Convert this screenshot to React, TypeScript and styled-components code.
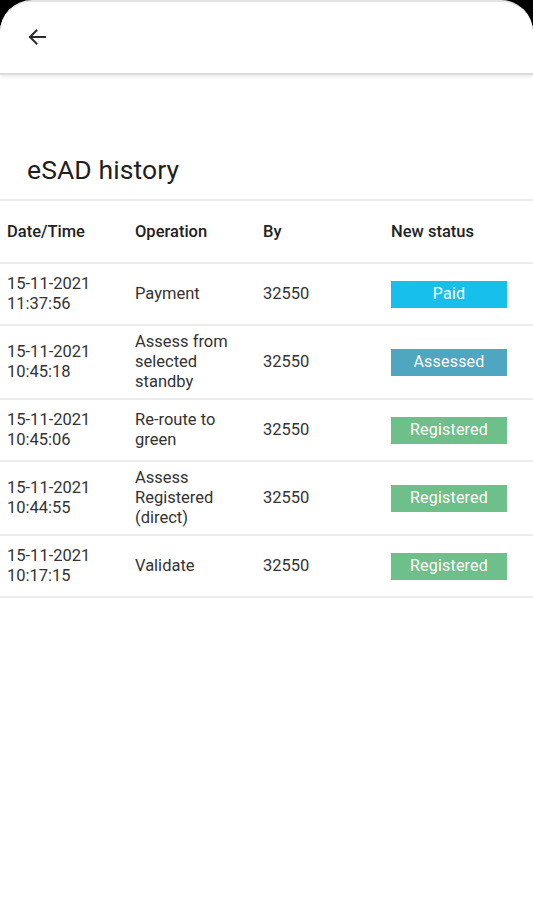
import React from "react";
import styled, { createGlobalStyle } from "styled-components";

const GlobalStyle = createGlobalStyle`
  html, body {
    margin: 0;
    padding: 0;
    background: #000;
  }
  body {
    font-family: Roboto, "Liberation Sans", Arial, sans-serif;
    -webkit-font-smoothing: antialiased;
  }
`;

const Screen = styled.div`
  position: relative;
  width: 533px;
  height: 900px;
  box-sizing: border-box;
  background: #fff;
  border-radius: 32px 32px 0 0;
  border-top: 2px solid #e3e3e3;
  overflow: hidden;
`;

const Notch = styled.div`
  position: absolute;
  top: -2px;
  left: 268px;
  width: 46px;
  height: 3px;
  background: #fff;
`;

const Header = styled.header`
  height: 71px;
  display: flex;
  align-items: center;
  padding-left: 25px;
  background: #fff;
  border-bottom: 2px solid #dcdcdc;
  box-shadow: 0 2px 3px rgba(0, 0, 0, 0.08);
`;

const BackButton = styled.button`
  width: 24px;
  height: 24px;
  margin-top: -2px;
  padding: 0;
  border: 0;
  background: none;
  display: flex;
  align-items: center;
  justify-content: center;
  color: #2b2b2b;
`;

const Title = styled.h1`
  margin: 0;
  padding: 79px 0 0 27px;
  height: 45px;
  font-size: 26.5px;
  font-weight: 400;
  line-height: 32px;
  color: #1e1e1e;
  letter-spacing: 0.1px;
`;

const Table = styled.table`
  width: 533px;
  border-collapse: collapse;
  table-layout: fixed;
  border-top: 2px solid #ececec;
`;

const HeadCell = styled.th`
  height: 61px;
  padding: 0 0 0 7px;
  text-align: left;
  font-size: 16.5px;
  font-weight: 500;
  color: #222;
  border-bottom: 2px solid #ececec;
`;

const Row = styled.tr`
  height: 62px;
  border-bottom: 2px solid #ececec;
`;

const Cell = styled.td`
  padding: 6px 0 6px 7px;
  vertical-align: middle;
  font-size: 16.5px;
  line-height: 20px;
  color: #333;
`;

const Badge = styled.div<{ $bg: string }>`
  width: 116px;
  height: 27px;
  display: flex;
  align-items: center;
  justify-content: center;
  background: ${(p) => p.$bg};
  color: #fff;
  font-size: 16px;
  letter-spacing: 0.2px;
`;

const STATUS_COLORS: Record<string, string> = {
  Paid: "#17bfeb",
  Assessed: "#4ea6c1",
  Registered: "#6dc089",
};

type Entry = { date: string; time: string; op: string[]; by: string; status: string };

const rows: Entry[] = [
  { date: "15-11-2021", time: "11:37:56", op: ["Payment"], by: "32550", status: "Paid" },
  {
    date: "15-11-2021",
    time: "10:45:18",
    op: ["Assess from", "selected", "standby"],
    by: "32550",
    status: "Assessed",
  },
  { date: "15-11-2021", time: "10:45:06", op: ["Re-route to", "green"], by: "32550", status: "Registered" },
  {
    date: "15-11-2021",
    time: "10:44:55",
    op: ["Assess", "Registered", "(direct)"],
    by: "32550",
    status: "Registered",
  },
  { date: "15-11-2021", time: "10:17:15", op: ["Validate"], by: "32550", status: "Registered" },
];

export default function App() {
  return (
    <>
      <GlobalStyle />
      <Screen>
        <Notch />
        <Header>
          <BackButton aria-label="Back">
            <svg width="24" height="24" viewBox="0 0 24 24" fill="none" stroke="currentColor" strokeWidth="2" strokeLinecap="square">
              <path d="M20 12H5" />
              <path d="M11.5 5.5L5 12l6.5 6.5" />
            </svg>
          </BackButton>
        </Header>
        <Title>eSAD history</Title>
        <Table>
          <colgroup>
            <col style={{ width: 128 }} />
            <col style={{ width: 128 }} />
            <col style={{ width: 128 }} />
            <col style={{ width: 149 }} />
          </colgroup>
          <thead>
            <tr>
              <HeadCell>Date/Time</HeadCell>
              <HeadCell>Operation</HeadCell>
              <HeadCell>By</HeadCell>
              <HeadCell>New status</HeadCell>
            </tr>
          </thead>
          <tbody>
            {rows.map((r, i) => (
              <Row key={i}>
                <Cell>
                  {r.date}
                  <br />
                  {r.time}
                </Cell>
                <Cell>
                  {r.op.map((l, j) => (
                    <React.Fragment key={j}>
                      {j > 0 && <br />}
                      {l}
                    </React.Fragment>
                  ))}
                </Cell>
                <Cell>{r.by}</Cell>
                <Cell>
                  <Badge $bg={STATUS_COLORS[r.status]}>{r.status}</Badge>
                </Cell>
              </Row>
            ))}
          </tbody>
        </Table>
      </Screen>
    </>
  );
}
